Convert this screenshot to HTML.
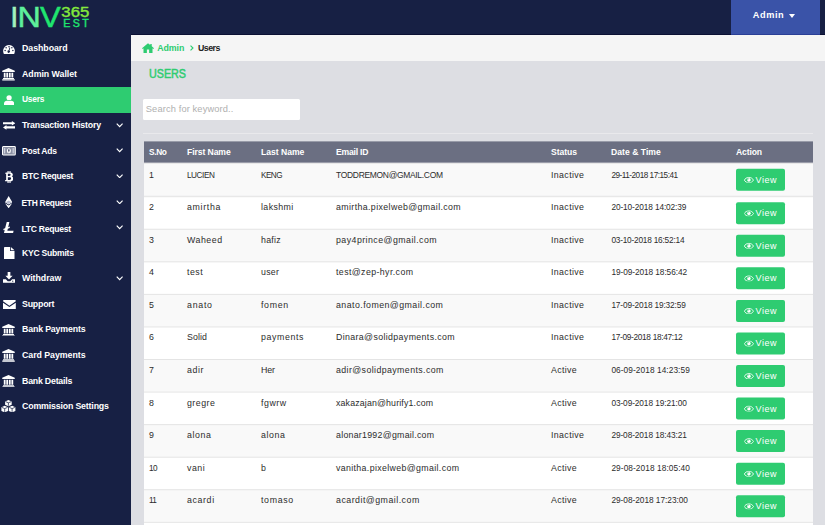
<!DOCTYPE html>
<html><head><meta charset="utf-8"><title>Users</title>
<style>
*{box-sizing:border-box;margin:0;padding:0}
html,body{width:825px;height:525px;overflow:hidden}
body{background:#dddee3;font-family:"Liberation Sans",sans-serif;position:relative;color:#333}
.top{position:absolute;left:0;top:0;width:825px;height:35.200px;background:#172044;border-bottom:1.200px solid #0b1033}
.side{position:absolute;left:0;top:0;width:131px;height:525px;background:#172044}
.adm{position:absolute;left:731px;top:0;width:88.500px;height:35.200px;background:#3a53a8;border-bottom:1.200px solid #2a3f96;color:#fff;font-size:9.200px;font-weight:bold}
.adm span{position:absolute;left:21.700px;top:10px;line-height:11px;letter-spacing:0.602px}
.adm i{position:absolute;left:58px;top:13.700px;border:3.300px solid transparent;border-top:4.400px solid #fff;border-bottom:0}
.logo{position:absolute;left:0;top:0}
.bc{position:absolute;left:131px;top:35.200px;width:694px;height:26.100px;background:#f5f5f5;font-size:8.800px;font-weight:bold}
.bc .a{position:absolute;left:26.300px;top:8px;color:#2ecc71;line-height:10px;letter-spacing:-0.098px}
.bc .s{position:absolute;left:59px;top:9.500px;width:3.500px;height:6px}
.bc .u{position:absolute;left:67px;top:8px;color:#222;line-height:10px;letter-spacing:-0.523px}
.bc .home{position:absolute;left:11px;top:7.500px;width:12px;height:10px}
.h1{position:absolute;left:148.700px;top:66.500px;font-size:12.200px;line-height:14px;color:#2ecc71;-webkit-text-stroke:.5px #2ecc71;transform:scaleX(0.881);transform-origin:0 0}
.search{position:absolute;left:142.800px;top:99.200px;width:157.400px;height:21px;background:#fff;border:0;border-radius:1.500px;font-size:9.300px;color:#b0b0b0;padding:4px 0 0 3px;line-height:12px;letter-spacing:0.121px;white-space:nowrap}
.hr{position:absolute;left:143px;top:133px;width:670px;height:1px;background:#e9e9ec}
.th{position:absolute;left:144px;top:141px;transform:translateY(.4px);width:669.200px;height:21.600px;background:#6b6f82;color:#fff;font-size:8.6px;font-weight:bold}
.th span{position:absolute;top:6px;line-height:10px;white-space:nowrap}
.row{position:absolute;left:144px;width:669.200px;border-top:1px solid #e4e4e4;font-size:8.8px;color:#2c2c2c}
.row.first .c{top:6px}
.row.odd{background:#f9f9f9}.row.even{background:#fff}
.c{position:absolute;top:5px;line-height:10px;white-space:nowrap}
.c1{left:5px}.c2{left:43px}.c3{left:117px}.c4{left:192px}.c5{left:407px}.c6{left:467.400px}
.btn{position:absolute;left:592px;top:5px;width:49px;height:21.600px;background:#2ecc71;border-radius:2px;color:#fff;font-size:9px}
.btn .eye{position:absolute;left:7.800px;top:7.600px;width:9.800px;height:6.600px}
.btn .bt{position:absolute;left:19.500px;top:6px;line-height:10px;letter-spacing:0.58px}
.side{color:#fff;font-size:8.8px;font-weight:bold}
.act{position:absolute;left:0;top:86.500px;width:131px;height:26px;background:#2ecc71}
.mt{position:absolute;line-height:10px;white-space:nowrap}
.ic{position:absolute;display:block}
.ic svg{width:100%;height:100%;display:block}
.chev{position:absolute;left:116px;width:7.300px;height:4.500px}
</style></head><body>
<div class="top"></div>
<div class="side">
<span class="ic" style="left:3.2px;top:45.4px;width:12px;height:8.3px"><svg viewBox="0 0 16 11" preserveAspectRatio="none"><path d="M8 0a8 8 0 0 0-7 11.500c.2.300.5.500.9.500h12.200c.4 0 .7-.200.9-.500A8 8 0 0 0 8 0z" fill="#fff"/><circle cx="8" cy="2.300" r="1" fill="#172044"/><circle cx="4.200" cy="3.800" r="1" fill="#172044"/><circle cx="11.800" cy="3.800" r="1" fill="#172044"/><circle cx="2.800" cy="7.300" r="1" fill="#172044"/><circle cx="13.200" cy="7.300" r="1" fill="#172044"/><path d="M9.800 3.500L8.600 7.200a1.700 1.700 0 1 1-1.100-.3l1.200-3.700z" fill="#172044"/></svg></span>
<span class="mt" style="left:22px;top:43px;letter-spacing:-0.041px">Dashboard</span>
<span class="ic" style="left:2.2px;top:68.2px;width:13px;height:12.4px"><svg viewBox="0 0 16 16" preserveAspectRatio="none"><path d="M8 0L0.300 3.600v1.500h15.400V3.600zM2.200 6h2.200v6.300H2.200zM5.300 6h2.200v6.300H5.300zM8.500 6h2.200v6.300H8.500zM11.600 6h2.200v6.300h-2.200zM1.300 12.900h13.400v1.300H1.300zM0.300 14.600h15.400V16H0.300z" fill="#fff"/></svg></span>
<span class="mt" style="left:22px;top:69px;letter-spacing:-0.036px">Admin Wallet</span>
<div class="act"></div>
<span class="ic" style="left:4px;top:94.7px;width:10.2px;height:10.6px"><svg viewBox="0 0 14 15" preserveAspectRatio="none"><circle cx="7" cy="3.800" r="3.600" fill="#fff"/><path d="M0 14v-1.800c0-2.500 1.800-4.200 4-4.200l.8 0c.7.300 1.400.5 2.200.5s1.500-.2 2.200-.5l.8 0c2.200 0 4 1.700 4 4.200V14c0 .6-.4 1-1 1H1c-.6 0-1-.4-1-1z" fill="#fff"/></svg></span>
<span class="mt" style="left:22px;top:94px"><b style="letter-spacing:-0.25px;font-size:8.41px">Users</b></span>
<span class="ic" style="left:2.9px;top:121.4px;width:12.3px;height:8.7px"><svg viewBox="0 0 16 11" preserveAspectRatio="none"><path d="M0 1.600h11.500V0l4.500 2.900-4.500 2.900V4.200H0zM16 9.400H4.500V11L0 8.100l4.500-2.900v1.600H16z" fill="#fff"/></svg></span>
<span class="mt" style="left:22px;top:120px;letter-spacing:-0.171px">Transaction History</span>
<svg class="chev" style="top:123.25px" viewBox="0 0 10 6" preserveAspectRatio="none"><path d="M1 .8l4 4 4-4" stroke="#fff" stroke-width="1.600" fill="none"/></svg>
<span class="ic" style="left:2.2px;top:146px;width:13.8px;height:9.5px"><svg viewBox="0 0 18 12" preserveAspectRatio="none"><rect x=".7" y=".7" width="16.600" height="10.600" rx="1" fill="#8b90a4" stroke="#fff" stroke-width="1.400"/><ellipse cx="9" cy="6" rx="2.600" ry="3.300" fill="#fff"/><circle cx="9" cy="5.200" r="1" fill="#172044"/><rect x="8.600" y="5.500" width=".8" height="2.500" fill="#172044"/><rect x="2.600" y="2.600" width="1.600" height="6.800" fill="#d0d3de"/><rect x="13.800" y="2.600" width="1.600" height="6.800" fill="#d0d3de"/></svg></span>
<span class="mt" style="left:22px;top:146px"><b style="letter-spacing:-0.248px;font-size:8.54px">Post Ads</b></span>
<svg class="chev" style="top:148.25px" viewBox="0 0 10 6" preserveAspectRatio="none"><path d="M1 .8l4 4 4-4" stroke="#fff" stroke-width="1.600" fill="none"/></svg>
<span class="ic" style="left:5px;top:171.1px;width:8.3px;height:11.9px"><svg viewBox="0 0 11 16" preserveAspectRatio="none"><path d="M1 2h2.300V0h1.500v2h1.100V0h1.500v2.100c1.800.3 3 1.300 3 3 0 1.200-.6 2-1.500 2.400 1.300.4 2.100 1.400 2.100 2.900 0 2.100-1.500 3.300-3.600 3.500V16H5.900v-2.100H4.800V16H3.300v-2.100H0l.3-1.700h1.200V3.700H0zm2.800 1.700v3h1.900c1 0 1.800-.5 1.800-1.500s-.8-1.500-1.800-1.500zm0 4.700v3.700h2.300c1.100 0 2-.6 2-1.850s-.9-1.850-2-1.850z" fill="#fff"/></svg></span>
<span class="mt" style="left:22px;top:171px"><b style="letter-spacing:-0.245px;font-size:8.57px">BTC Request</b></span>
<svg class="chev" style="top:173.95px" viewBox="0 0 10 6" preserveAspectRatio="none"><path d="M1 .8l4 4 4-4" stroke="#fff" stroke-width="1.600" fill="none"/></svg>
<span class="ic" style="left:4.6px;top:196px;width:7.3px;height:12.3px"><svg viewBox="0 0 10 16" preserveAspectRatio="none"><path d="M5 0L0 8.200l5 3 5-3z" fill="#fff"/><path d="M0 9.300L5 16l5-6.700-5 3z" fill="#fff"/><path d="M5 6l-4 2.100L5 10.500l4-2.400z" fill="#b9bdd0"/></svg></span>
<span class="mt" style="left:21.4px;top:198px"><b style="letter-spacing:-0.244px;font-size:8.42px">ETH Request</b></span>
<svg class="chev" style="top:199.95px" viewBox="0 0 10 6" preserveAspectRatio="none"><path d="M1 .8l4 4 4-4" stroke="#fff" stroke-width="1.600" fill="none"/></svg>
<span class="ic" style="left:2.9px;top:222px;width:10.9px;height:11.2px"><svg viewBox="0 0 14 14" preserveAspectRatio="none"><path d="M4.800 0h3.400L6.700 6.500l2.300-.9-.5 2-2.300.9-.6 2.600h8l-.7 2.900H1.200l1-4.300-1.900.7.500-2 1.900-.7z" fill="#fff"/></svg></span>
<span class="mt" style="left:21.4px;top:224px"><b style="letter-spacing:-0.247px;font-size:8.58px">LTC Request</b></span>
<svg class="chev" style="top:225.45px" viewBox="0 0 10 6" preserveAspectRatio="none"><path d="M1 .8l4 4 4-4" stroke="#fff" stroke-width="1.600" fill="none"/></svg>
<span class="ic" style="left:4px;top:246.7px;width:10.5px;height:12.6px"><svg viewBox="0 0 13 16" preserveAspectRatio="none"><path d="M0 1a1 1 0 0 1 1-1h6.500v5h5.500V15a1 1 0 0 1-1 1H1a1 1 0 0 1-1-1zM8.500 0L13 4.200H8.500z" fill="#fff"/></svg></span>
<span class="mt" style="left:22px;top:248px"><b style="letter-spacing:-0.244px;font-size:8.61px">KYC Submits</b></span>
<span class="ic" style="left:3.2px;top:272.4px;width:12px;height:10.7px"><svg viewBox="0 0 16 14" preserveAspectRatio="none"><path d="M6.200 0h3.600v4.800h3L8 9.800 3.200 4.800h3z" fill="#fff"/><path d="M0 9.500h3.800L6.300 12h3.400l2.500-2.500H16V14H0z" fill="#fff"/><circle cx="13" cy="12" r=".8" fill="#172044"/></svg></span>
<span class="mt" style="left:22px;top:273px;letter-spacing:-0.027px">Withdraw</span>
<svg class="chev" style="top:276.05px" viewBox="0 0 10 6" preserveAspectRatio="none"><path d="M1 .8l4 4 4-4" stroke="#fff" stroke-width="1.600" fill="none"/></svg>
<span class="ic" style="left:2.9px;top:299.5px;width:12.8px;height:9.7px"><svg viewBox="0 0 16 12" preserveAspectRatio="none"><path d="M1.200 0h13.600c.7 0 1.200.5 1.200 1.200v.5L8 7.200 0 1.700v-.5C0 .5.500 0 1.200 0zM0 3.300l8 5.500 8-5.500v7.500c0 .7-.5 1.200-1.200 1.200H1.200C.5 12 0 11.500 0 10.800z" fill="#fff"/></svg></span>
<span class="mt" style="left:22px;top:299px;letter-spacing:-0.208px">Support</span>
<span class="ic" style="left:2.2px;top:323.7px;width:13px;height:12.5px"><svg viewBox="0 0 16 16" preserveAspectRatio="none"><path d="M8 0L0.300 3.600v1.500h15.400V3.600zM2.200 6h2.200v6.300H2.200zM5.300 6h2.200v6.300H5.300zM8.500 6h2.200v6.300H8.500zM11.600 6h2.200v6.300h-2.200zM1.300 12.900h13.400v1.300H1.300zM0.300 14.600h15.400V16H0.300z" fill="#fff"/></svg></span>
<span class="mt" style="left:22px;top:324px;letter-spacing:-0.164px">Bank Payments</span>
<span class="ic" style="left:2.2px;top:349px;width:13px;height:12.7px"><svg viewBox="0 0 16 16" preserveAspectRatio="none"><path d="M8 0L0.300 3.600v1.500h15.400V3.600zM2.200 6h2.200v6.300H2.200zM5.300 6h2.200v6.300H5.300zM8.500 6h2.200v6.300H8.500zM11.600 6h2.200v6.300h-2.200zM1.300 12.900h13.400v1.300H1.300zM0.300 14.600h15.400V16H0.300z" fill="#fff"/></svg></span>
<span class="mt" style="left:22px;top:350px;letter-spacing:-0.04px">Card Payments</span>
<span class="ic" style="left:2.2px;top:374.5px;width:13px;height:12.6px"><svg viewBox="0 0 16 16" preserveAspectRatio="none"><path d="M8 0L0.300 3.600v1.500h15.400V3.600zM2.200 6h2.200v6.300H2.200zM5.300 6h2.200v6.300H5.300zM8.500 6h2.200v6.300H8.500zM11.600 6h2.200v6.300h-2.200zM1.300 12.900h13.400v1.300H1.300zM0.300 14.600h15.400V16H0.300z" fill="#fff"/></svg></span>
<span class="mt" style="left:22px;top:376px;letter-spacing:-0.223px">Bank Details</span>
<span class="ic" style="left:1.4px;top:400.1px;width:14.8px;height:12.4px"><svg viewBox="0 0 18 15" preserveAspectRatio="none"><path d="M9 0l4 1.700v4.200L9 7.600 5 5.900V1.700zM4.500 7l4 1.700v4.500l-4 1.800-4-1.800V8.700zM13.500 7l4 1.700v4.500l-4 1.800-4-1.800V8.700z" fill="#fff"/><path d="M5.600 2l3.400 1.400L12.400 2M9 3.400V7M1.100 9l3.400 1.400L7.900 9M4.500 10.400v4M10.100 9l3.400 1.400L16.900 9M13.500 10.400v4" stroke="#172044" stroke-width=".9" fill="none"/></svg></span>
<span class="mt" style="left:22px;top:401px;letter-spacing:-0.166px">Commission Settings</span>
</div>
<svg class="logo" width="110" height="35" viewBox="0 0 110 35" font-family="Liberation Sans, sans-serif">
<g stroke-width=".5">
<text x="10.300" y="26.800" font-size="29" fill="#a3f2bd" stroke="#a3f2bd">I</text>
<text x="17.500" y="26.800" font-size="29" fill="#5df09b" stroke="#5df09b" textLength="23.300" lengthAdjust="spacingAndGlyphs">N</text>
<text x="40" y="26.800" font-size="29" fill="#1fe56f" stroke="#1fe56f" textLength="20.700" lengthAdjust="spacingAndGlyphs">V</text>
<text x="61.300" y="16.600" font-size="15.200" fill="#84e83c" stroke="#84e83c" stroke-width=".4" textLength="28" lengthAdjust="spacingAndGlyphs">365</text>
<text x="63.200" y="27" font-size="10.600" fill="#1fe56f" stroke="#1fe56f" stroke-width=".4" textLength="25.500" lengthAdjust="spacing">EST</text>
</g>
</svg>
<div class="adm"><span>Admin</span><i></i></div>
<div class="bc"><svg class="home" viewBox="0 0 16 13"><path d="M8 0L0 6.800l.9 1L2 6.900V13h4.500V8.500h3V13H14V6.900l1.100.9.900-1L13 4.200V1h-2v1.500z" fill="#2ecc71"/></svg><span class="a">Admin</span><svg class="s" viewBox="0 0 4 7" preserveAspectRatio="none"><path d="M.6.600l2.800 2.900-2.800 2.900" stroke="#2ecc71" stroke-width="1.300" fill="none"/></svg><span class="u">Users</span></div>
<div class="h1">USERS</div>
<div class="search">Search for keyword..</div>
<div class="hr"></div>
<div class="th"><span style="left:5px"><b style="letter-spacing:-0.344px;font-size:8.3px">S.No</b></span><span style="left:43px;letter-spacing:-0.083px">First Name</span><span style="left:117px;letter-spacing:-0.016px">Last Name</span><span style="left:192px;letter-spacing:-0.208px">Email ID</span><span style="left:407px;letter-spacing:-0.047px">Status</span><span style="left:467px;letter-spacing:0.03px">Date &amp; Time</span><span style="left:592px;letter-spacing:-0.122px">Action</span></div>
<div class="row odd first" style="top:162px;height:33.40px;transform:translateY(0.80px)"><span class="c c1" style="letter-spacing:0px">1</span><span class="c c2"><span style="letter-spacing:-0.441px;font-size:8.2px">LUCIEN</span></span><span class="c c3"><span style="letter-spacing:-0.536px;font-size:8.2px">KENG</span></span><span class="c c4"><span style="letter-spacing:-0.302px;font-size:8.47px">TODDREMON@GMAIL.COM</span></span><span class="c c5" style="letter-spacing:0.379px">Inactive</span><span class="c c6"><span style="letter-spacing:-0.485px;font-size:8.2px">29-11-2018 17:15:41</span></span><span class="btn"><svg class="eye" viewBox="0 0 20 13" preserveAspectRatio="none"><path d="M10 1C5.500 1 2 4 .6 6.500 2 9 5.500 12 10 12s8-3 9.400-5.500C18 4 14.500 1 10 1z" fill="none" stroke="#fff" stroke-width="1.700"/><circle cx="10" cy="6.200" r="3.600" fill="#fff"/><path d="M10 3.600a2.600 2.600 0 0 0-2.600 2.600" stroke="#2ecc71" stroke-width="1" fill="none"/></svg><span class="bt">View</span></span></div>
<div class="row even" style="top:196px;height:32.56px;transform:translateY(0.20px)"><span class="c c1" style="letter-spacing:0px">2</span><span class="c c2" style="letter-spacing:0.669px">amirtha</span><span class="c c3" style="letter-spacing:0.409px">lakshmi</span><span class="c c4" style="letter-spacing:0.387px">amirtha.pixelweb@gmail.com</span><span class="c c5" style="letter-spacing:0.379px">Inactive</span><span class="c c6"><span style="letter-spacing:-0.114px;font-size:8.3px">20-10-2018 14:02:39</span></span><span class="btn"><svg class="eye" viewBox="0 0 20 13" preserveAspectRatio="none"><path d="M10 1C5.500 1 2 4 .6 6.500 2 9 5.500 12 10 12s8-3 9.400-5.500C18 4 14.500 1 10 1z" fill="none" stroke="#fff" stroke-width="1.700"/><circle cx="10" cy="6.200" r="3.600" fill="#fff"/><path d="M10 3.600a2.600 2.600 0 0 0-2.600 2.600" stroke="#2ecc71" stroke-width="1" fill="none"/></svg><span class="bt">View</span></span></div>
<div class="row odd" style="top:228px;height:32.56px;transform:translateY(0.76px)"><span class="c c1" style="letter-spacing:0px">3</span><span class="c c2" style="letter-spacing:0.519px">Waheed</span><span class="c c3" style="letter-spacing:0.238px">hafiz</span><span class="c c4" style="letter-spacing:0.45px">pay4prince@gmail.com</span><span class="c c5" style="letter-spacing:0.379px">Inactive</span><span class="c c6"><span style="letter-spacing:-0.219px;font-size:8.3px">03-10-2018 16:52:14</span></span><span class="btn"><svg class="eye" viewBox="0 0 20 13" preserveAspectRatio="none"><path d="M10 1C5.500 1 2 4 .6 6.500 2 9 5.500 12 10 12s8-3 9.400-5.500C18 4 14.500 1 10 1z" fill="none" stroke="#fff" stroke-width="1.700"/><circle cx="10" cy="6.200" r="3.600" fill="#fff"/><path d="M10 3.600a2.600 2.600 0 0 0-2.600 2.600" stroke="#2ecc71" stroke-width="1" fill="none"/></svg><span class="bt">View</span></span></div>
<div class="row even" style="top:261px;height:32.56px;transform:translateY(0.32px)"><span class="c c1" style="letter-spacing:0px">4</span><span class="c c2" style="letter-spacing:0.464px">test</span><span class="c c3" style="letter-spacing:0.276px">user</span><span class="c c4" style="letter-spacing:0.4px">test@zep-hyr.com</span><span class="c c5" style="letter-spacing:0.379px">Inactive</span><span class="c c6"><span style="letter-spacing:-0.075px;font-size:8.3px">19-09-2018 18:56:42</span></span><span class="btn"><svg class="eye" viewBox="0 0 20 13" preserveAspectRatio="none"><path d="M10 1C5.500 1 2 4 .6 6.500 2 9 5.500 12 10 12s8-3 9.400-5.500C18 4 14.500 1 10 1z" fill="none" stroke="#fff" stroke-width="1.700"/><circle cx="10" cy="6.200" r="3.600" fill="#fff"/><path d="M10 3.600a2.600 2.600 0 0 0-2.600 2.600" stroke="#2ecc71" stroke-width="1" fill="none"/></svg><span class="bt">View</span></span></div>
<div class="row odd" style="top:293px;height:32.56px;transform:translateY(0.88px)"><span class="c c1" style="letter-spacing:0px">5</span><span class="c c2" style="letter-spacing:0.734px">anato</span><span class="c c3" style="letter-spacing:0.676px">fomen</span><span class="c c4" style="letter-spacing:0.451px">anato.fomen@gmail.com</span><span class="c c5" style="letter-spacing:0.379px">Inactive</span><span class="c c6"><span style="letter-spacing:-0.147px;font-size:8.3px">17-09-2018 19:32:59</span></span><span class="btn"><svg class="eye" viewBox="0 0 20 13" preserveAspectRatio="none"><path d="M10 1C5.500 1 2 4 .6 6.500 2 9 5.500 12 10 12s8-3 9.400-5.500C18 4 14.500 1 10 1z" fill="none" stroke="#fff" stroke-width="1.700"/><circle cx="10" cy="6.200" r="3.600" fill="#fff"/><path d="M10 3.600a2.600 2.600 0 0 0-2.600 2.600" stroke="#2ecc71" stroke-width="1" fill="none"/></svg><span class="bt">View</span></span></div>
<div class="row even" style="top:326px;height:32.56px;transform:translateY(0.44px)"><span class="c c1" style="letter-spacing:0px">6</span><span class="c c2" style="letter-spacing:0.098px">Solid</span><span class="c c3" style="letter-spacing:0.609px">payments</span><span class="c c4" style="letter-spacing:0.368px">Dinara@solidpayments.com</span><span class="c c5" style="letter-spacing:0.379px">Inactive</span><span class="c c6"><span style="letter-spacing:-0.319px;font-size:8.3px">17-09-2018 18:47:12</span></span><span class="btn"><svg class="eye" viewBox="0 0 20 13" preserveAspectRatio="none"><path d="M10 1C5.500 1 2 4 .6 6.500 2 9 5.500 12 10 12s8-3 9.400-5.500C18 4 14.500 1 10 1z" fill="none" stroke="#fff" stroke-width="1.700"/><circle cx="10" cy="6.200" r="3.600" fill="#fff"/><path d="M10 3.600a2.600 2.600 0 0 0-2.600 2.600" stroke="#2ecc71" stroke-width="1" fill="none"/></svg><span class="bt">View</span></span></div>
<div class="row odd" style="top:359px;height:32.56px;transform:translateY(0.00px)"><span class="c c1" style="letter-spacing:0px">7</span><span class="c c2" style="letter-spacing:0.583px">adir</span><span class="c c3" style="letter-spacing:-0.07px">Her</span><span class="c c4" style="letter-spacing:0.403px">adir@solidpayments.com</span><span class="c c5" style="letter-spacing:0.325px">Active</span><span class="c c6"><span style="letter-spacing:0.075px;font-size:8.3px">06-09-2018 14:23:59</span></span><span class="btn"><svg class="eye" viewBox="0 0 20 13" preserveAspectRatio="none"><path d="M10 1C5.500 1 2 4 .6 6.500 2 9 5.500 12 10 12s8-3 9.400-5.500C18 4 14.500 1 10 1z" fill="none" stroke="#fff" stroke-width="1.700"/><circle cx="10" cy="6.200" r="3.600" fill="#fff"/><path d="M10 3.600a2.600 2.600 0 0 0-2.600 2.600" stroke="#2ecc71" stroke-width="1" fill="none"/></svg><span class="bt">View</span></span></div>
<div class="row even" style="top:391px;height:32.56px;transform:translateY(0.56px)"><span class="c c1" style="letter-spacing:0px">8</span><span class="c c2" style="letter-spacing:0.475px">gregre</span><span class="c c3" style="letter-spacing:0.539px">fgwrw</span><span class="c c4" style="letter-spacing:0.152px">xakazajan@hurify1.com</span><span class="c c5" style="letter-spacing:0.325px">Active</span><span class="c c6"><span style="letter-spacing:-0.091px;font-size:8.3px">03-09-2018 19:21:00</span></span><span class="btn"><svg class="eye" viewBox="0 0 20 13" preserveAspectRatio="none"><path d="M10 1C5.500 1 2 4 .6 6.500 2 9 5.500 12 10 12s8-3 9.400-5.500C18 4 14.500 1 10 1z" fill="none" stroke="#fff" stroke-width="1.700"/><circle cx="10" cy="6.200" r="3.600" fill="#fff"/><path d="M10 3.600a2.600 2.600 0 0 0-2.600 2.600" stroke="#2ecc71" stroke-width="1" fill="none"/></svg><span class="bt">View</span></span></div>
<div class="row odd" style="top:424px;height:32.56px;transform:translateY(0.12px)"><span class="c c1" style="letter-spacing:0px">9</span><span class="c c2" style="letter-spacing:0.609px">alona</span><span class="c c3" style="letter-spacing:0.609px">alona</span><span class="c c4" style="letter-spacing:0.266px">alonar1992@gmail.com</span><span class="c c5" style="letter-spacing:0.379px">Inactive</span><span class="c c6"><span style="letter-spacing:-0.091px;font-size:8.3px">29-08-2018 18:43:21</span></span><span class="btn"><svg class="eye" viewBox="0 0 20 13" preserveAspectRatio="none"><path d="M10 1C5.500 1 2 4 .6 6.500 2 9 5.500 12 10 12s8-3 9.400-5.500C18 4 14.500 1 10 1z" fill="none" stroke="#fff" stroke-width="1.700"/><circle cx="10" cy="6.200" r="3.600" fill="#fff"/><path d="M10 3.600a2.600 2.600 0 0 0-2.600 2.600" stroke="#2ecc71" stroke-width="1" fill="none"/></svg><span class="bt">View</span></span></div>
<div class="row even" style="top:456px;height:32.56px;transform:translateY(0.68px)"><span class="c c1"><span style="letter-spacing:-0.6px;font-size:8.2px">10</span></span><span class="c c2" style="letter-spacing:0.516px">vani</span><span class="c c3" style="letter-spacing:0px">b</span><span class="c c4" style="letter-spacing:0.358px">vanitha.pixelweb@gmail.com</span><span class="c c5" style="letter-spacing:0.325px">Active</span><span class="c c6"><span style="letter-spacing:0.081px;font-size:8.3px">29-08-2018 18:05:40</span></span><span class="btn"><svg class="eye" viewBox="0 0 20 13" preserveAspectRatio="none"><path d="M10 1C5.500 1 2 4 .6 6.500 2 9 5.500 12 10 12s8-3 9.400-5.500C18 4 14.500 1 10 1z" fill="none" stroke="#fff" stroke-width="1.700"/><circle cx="10" cy="6.200" r="3.600" fill="#fff"/><path d="M10 3.600a2.600 2.600 0 0 0-2.600 2.600" stroke="#2ecc71" stroke-width="1" fill="none"/></svg><span class="bt">View</span></span></div>
<div class="row odd" style="top:489px;height:32.56px;transform:translateY(0.24px)"><span class="c c1"><span style="letter-spacing:-0.6px;font-size:8.2px">11</span></span><span class="c c2" style="letter-spacing:0.628px">acardi</span><span class="c c3" style="letter-spacing:0.678px">tomaso</span><span class="c c4" style="letter-spacing:0.487px">acardit@gmail.com</span><span class="c c5" style="letter-spacing:0.325px">Active</span><span class="c c6"><span style="letter-spacing:-0.025px;font-size:8.3px">29-08-2018 17:23:00</span></span><span class="btn"><svg class="eye" viewBox="0 0 20 13" preserveAspectRatio="none"><path d="M10 1C5.500 1 2 4 .6 6.500 2 9 5.500 12 10 12s8-3 9.400-5.500C18 4 14.500 1 10 1z" fill="none" stroke="#fff" stroke-width="1.700"/><circle cx="10" cy="6.200" r="3.600" fill="#fff"/><path d="M10 3.600a2.600 2.600 0 0 0-2.600 2.600" stroke="#2ecc71" stroke-width="1" fill="none"/></svg><span class="bt">View</span></span></div>
<div class="row even" style="top:521px;height:32.56px;transform:translateY(0.80px)"></div>
</body></html>
